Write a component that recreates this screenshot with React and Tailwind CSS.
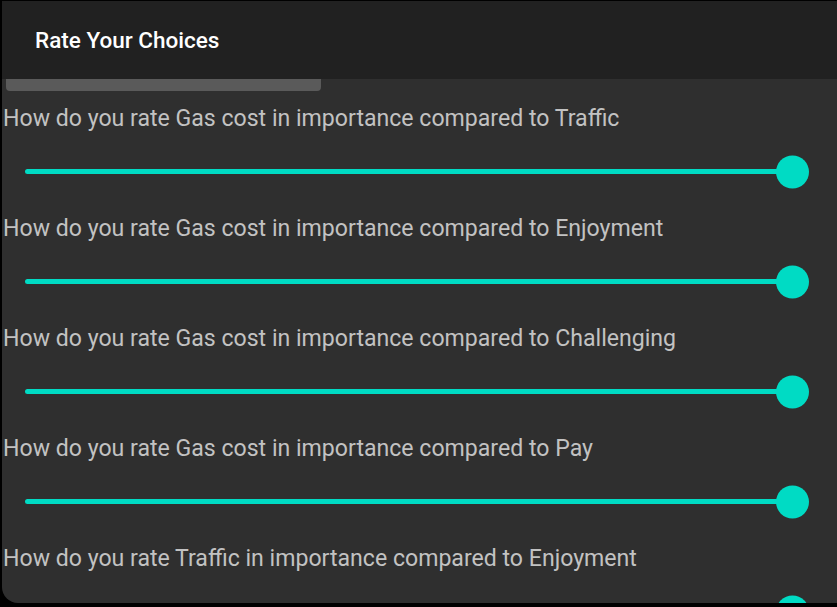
import React from 'react';

const questions = [
  'How do you rate Gas cost in importance compared to Traffic',
  'How do you rate Gas cost in importance compared to Enjoyment',
  'How do you rate Gas cost in importance compared to Challenging',
  'How do you rate Gas cost in importance compared to Pay',
  'How do you rate Traffic in importance compared to Enjoyment',
];

const RatingSlider = () => (
  <div className="h-[33px] flex items-center pl-[23px] pr-[45px]">
    <div className="relative w-full h-[5px] rounded-full bg-[#00dbc4]">
      <div className="absolute right-[-16.5px] top-1/2 -translate-y-1/2 w-[33px] h-[33px] rounded-full bg-[#00dbc4]" />
    </div>
  </div>
);

const App = () => {
  return (
    <div
      className="h-[607px] w-[837px] bg-black pl-[2px] pt-[1px] pb-[4px] overflow-hidden"
      style={{ fontFamily: 'Roboto, "Liberation Sans", sans-serif' }}
    >
      <div className="h-full bg-[#2f2f2f] rounded-bl-[16px] overflow-hidden flex flex-col">
        <div className="h-[78px] shrink-0 bg-[#212121] flex items-center pl-[33px]">
          <h1 className="text-white text-[22.5px] font-medium pt-[1px]">Rate Your Choices</h1>
        </div>
        <div className="flex-1 overflow-hidden">
          <div className="ml-[4px] w-[315px] h-[12px] bg-[#5a5a5a] rounded-b-[4px]" />
          <div className="mt-[13px] flex flex-col">
            {questions.map((q) => (
              <div key={q} className="h-[110px] shrink-0 flex flex-col">
                <p className="h-[30px] leading-[30px] text-[23.1px] text-[#c2c2c2] pl-[1px] whitespace-nowrap">{q}</p>
                <div className="mt-[21px]">
                  <RatingSlider />
                </div>
              </div>
            ))}
          </div>
        </div>
      </div>
    </div>
  );
};

export default App;
